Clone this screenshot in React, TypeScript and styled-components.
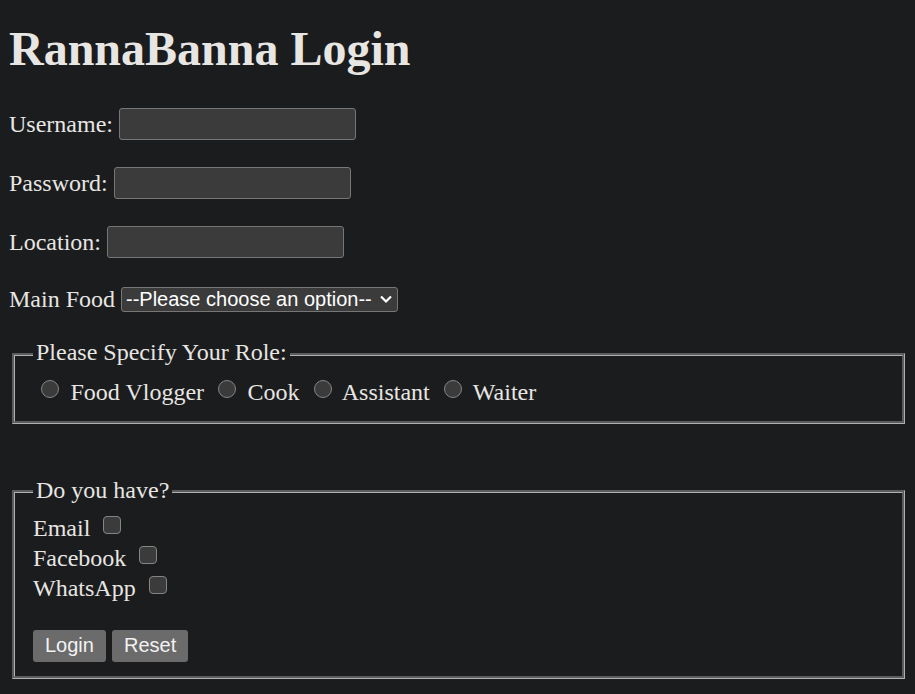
import React from 'react';
import styled, { createGlobalStyle } from 'styled-components';

const GlobalStyle = createGlobalStyle`
  html, body {
    margin: 0;
    padding: 0;
    background: #1b1c1e;
  }
  body {
    color: #e8e6e3;
    font-family: "Liberation Serif", "Times New Roman", serif;
    font-size: 24px;
    color-scheme: dark;
  }
  * {
    box-sizing: border-box;
  }
`;

const Page = styled.div`
  min-height: 694px;
  padding: 21px 8px 0 9px;
`;

const Title = styled.h1`
  margin: 0 0 32px;
  font-size: 48px;
  line-height: 55px;
  font-weight: bold;
`;

const Form = styled.form`
  display: flex;
  flex-direction: column;
`;

const FieldRow = styled.div<{ $height?: number }>`
  display: flex;
  align-items: center;
  gap: 6px;
  height: ${(p) => p.$height ?? 32}px;
  margin-bottom: 27px;
`;

const Label = styled.label`
  white-space: nowrap;
`;

const TextInput = styled.input`
  width: 237px;
  height: 32px;
  padding: 1px 4px;
  background: #3b3b3b;
  color: #ffffff;
  border: 1px solid #767676;
  border-radius: 3px;
  font-family: "Liberation Sans", Arial, sans-serif;
  font-size: 20px;
  outline: none;
`;

const SelectWrap = styled.span`
  position: relative;
  display: inline-flex;
`;

const Select = styled.select`
  appearance: none;
  width: 277px;
  height: 25px;
  padding: 0 22px 0 4px;
  background: #3b3b3b;
  color: #ffffff;
  border: 1px solid #767676;
  border-radius: 3px;
  font-family: "Liberation Sans", Arial, sans-serif;
  font-size: 20px;
  line-height: 23px;
  outline: none;
`;

const Chevron = styled.svg`
  position: absolute;
  right: 6px;
  top: 8px;
  pointer-events: none;
`;

const Group = styled.fieldset<{ $top: number; $padTop: number }>`
  margin: ${(p) => p.$top}px 2px 0 3px;
  padding: ${(p) => p.$padTop}px 18px 14.5px;
  border: 3px groove #b0b0b0;
  min-width: 0;
`;

const Legend = styled.legend`
  padding: 0 3px 3px;
  font-size: 24px;
`;

const RadioRow = styled.div`
  white-space: nowrap;
`;

const RadioInput = styled.input.attrs({ type: 'radio' })`
  appearance: none;
  display: inline-block;
  width: 18px;
  height: 18px;
  margin: 0 5.5px 2px 8px;
  border-radius: 50%;
  background: #3b3b3b;
  border: 1.5px solid #858585;
  vertical-align: baseline;
`;

const CheckRow = styled.div`
  height: 30px;
  line-height: 30px;
  white-space: nowrap;
`;

const CheckInput = styled.input.attrs({ type: 'checkbox' })`
  appearance: none;
  display: inline-block;
  width: 18px;
  height: 18px;
  margin: 0 0 2px 7px;
  border-radius: 4px;
  background: #3b3b3b;
  border: 1.5px solid #858585;
  vertical-align: baseline;
`;

const ButtonRow = styled.div`
  display: flex;
  gap: 6px;
  margin-top: 26.4px;
`;

const Button = styled.button`
  height: 32px;
  padding: 0 12px;
  background: #6b6b6b;
  color: #f2f2f2;
  border: none;
  border-radius: 3px;
  font-family: "Liberation Sans", Arial, sans-serif;
  font-size: 20px;
`;

const roles = ['Food Vlogger', 'Cook', 'Assistant', 'Waiter'];
const accounts = ['Email', 'Facebook', 'WhatsApp'];

const App: React.FC = () => {
  return (
    <>
      <GlobalStyle />
      <Page>
        <Title>RannaBanna Login</Title>
        <Form onSubmit={(e) => e.preventDefault()}>
          <FieldRow>
            <Label htmlFor="username">Username:</Label>
            <TextInput id="username" type="text" />
          </FieldRow>
          <FieldRow>
            <Label htmlFor="password">Password:</Label>
            <TextInput id="password" type="password" />
          </FieldRow>
          <FieldRow>
            <Label htmlFor="location">Location:</Label>
            <TextInput id="location" type="text" />
          </FieldRow>
          <FieldRow $height={28}>
            <Label htmlFor="food">Main Food</Label>
            <SelectWrap>
              <Select id="food" defaultValue="">
                <option value="">--Please choose an option--</option>
                <option value="rice">Rice</option>
                <option value="bread">Bread</option>
              </Select>
              <Chevron width="12" height="9" viewBox="0 0 12 9">
                <polyline
                  points="1,1.5 6,6.5 11,1.5"
                  fill="none"
                  stroke="#ffffff"
                  strokeWidth="2.2"
                />
              </Chevron>
            </SelectWrap>
          </FieldRow>

          <Group $top={-1} $padTop={10.4}>
            <Legend>Please Specify Your Role:</Legend>
            <RadioRow>
              {roles.map((role) => (
                <React.Fragment key={role}>
                  <RadioInput name="role" value={role} id={role} />{' '}
                  <label htmlFor={role}>{role}</label>{' '}
                </React.Fragment>
              ))}
            </RadioRow>
          </Group>

          <Group $top={53} $padTop={6.5}>
            <Legend>Do you have?</Legend>
            {accounts.map((acc) => (
              <CheckRow key={acc}>
                <label htmlFor={acc}>{acc}</label> <CheckInput id={acc} />
              </CheckRow>
            ))}
            <ButtonRow>
              <Button type="submit">Login</Button>
              <Button type="reset">Reset</Button>
            </ButtonRow>
          </Group>
        </Form>
      </Page>
    </>
  );
};

export default App;
